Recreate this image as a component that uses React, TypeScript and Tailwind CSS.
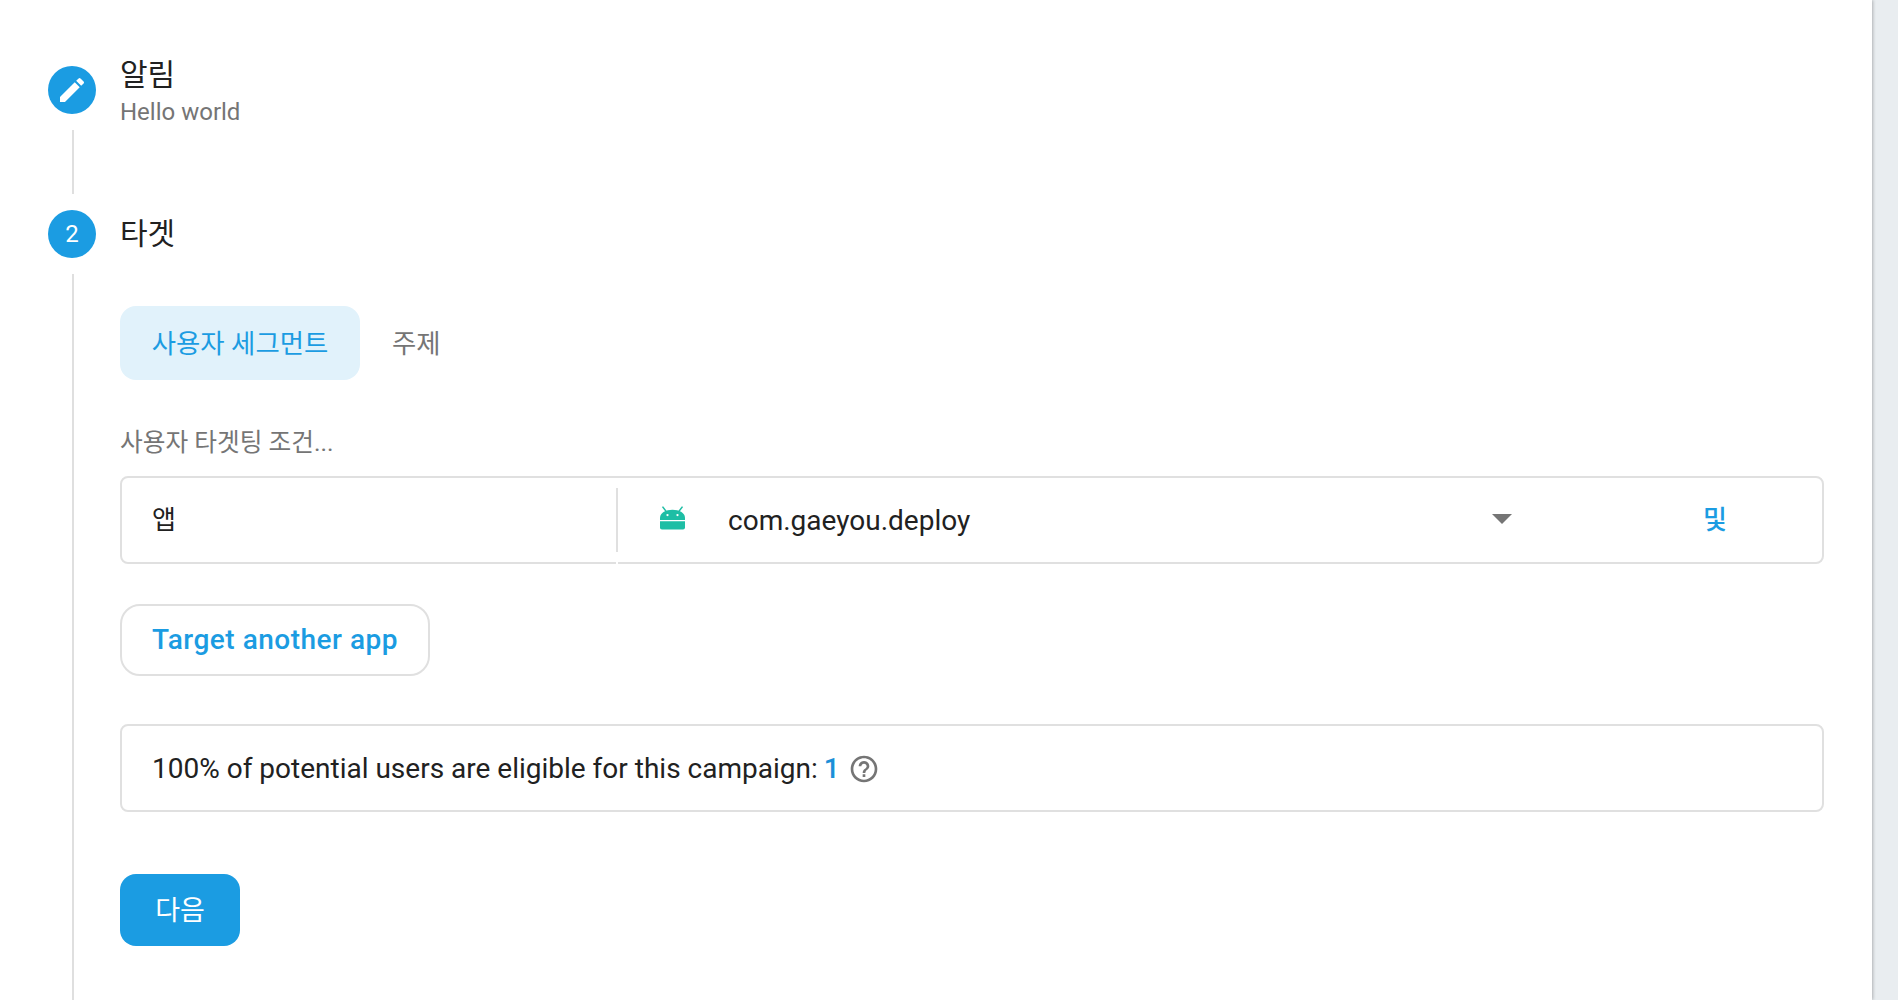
const FONT = "font-['Roboto','Noto_Sans_CJK_KR',sans-serif]"

function AndroidIcon() {
  return (
    <svg className="w-[25px] h-[24px]" viewBox="0 0 26 24" fill="#1ebea5">
      <path d="M0 11.5C0.4 6.5 6 3.5 13 3.5S25.6 6.5 26 11.5V14H0Z" />
      <path d="M0 15.5H26V22A2 2 0 0 1 24 24H2A2 2 0 0 1 0 22Z" />
      <path d="M2.6 0.2L6.6 5.4" stroke="#1ebea5" strokeWidth="1.6" />
      <path d="M23.4 0.2L19.4 5.4" stroke="#1ebea5" strokeWidth="1.6" />
      <circle cx="7.8" cy="9" r="1.2" fill="#fff" />
      <circle cx="18.2" cy="9" r="1.2" fill="#fff" />
    </svg>
  )
}

export default function App() {
  return (
    <div className={`h-screen overflow-hidden flex bg-[#e9edf0] ${FONT}`}>
      <div className="w-[1872px] h-full bg-white shadow-[1px_0_3px_rgba(0,0,0,0.25)] pl-12 pt-[58px] flex flex-col">
        {/* Step 1 */}
        <div className="flex items-center gap-6 h-16">
          <div className="w-12 h-12 rounded-full bg-[#1b9ce2] flex items-center justify-center">
            <svg className="w-8 h-8" viewBox="0 0 24 24" fill="#fff">
              <path d="M3 17.25V21h3.75L17.81 9.94l-3.75-3.75L3 17.25zM20.71 7.04a1 1 0 0 0 0-1.41l-2.34-2.34a1 1 0 0 0-1.41 0l-1.83 1.83 3.75 3.75 1.83-1.83z" />
            </svg>
          </div>
          <div className="mt-[7px]">
            <div className="text-[30px] leading-8 text-[#212121]">알림</div>
            <div className="mt-[5px] text-2xl leading-8 text-[#757575]">Hello world</div>
          </div>
        </div>
        <div className="ml-6 mt-2 h-16 w-0.5 bg-[#dfdfdf]" />

        {/* Step 2 */}
        <div className="flex items-center gap-6 h-12 mt-4">
          <div className="w-12 h-12 rounded-full bg-[#1b9ce2] flex items-center justify-center text-white text-2xl">2</div>
          <div className="text-[30px] leading-8 text-[#212121]">타겟</div>
        </div>
        <div className="ml-6 mt-4 flex-1 border-l-2 border-[#dfdfdf] pl-[46px] pt-8 pr-12">
          <div className="flex items-center gap-8">
            <div className="w-[240px] h-[74px] rounded-2xl bg-[#e1f2fb] text-[#1b9ce2] text-[26.4px] pt-1 flex items-center justify-center">사용자 세그먼트</div>
            <div className="text-[26.4px] text-[#757575] pt-1">주제</div>
          </div>

          <div className="mt-[47px] text-[24.7px] leading-8 text-[#757575]">사용자 타겟팅 조건...</div>

          <div className="mt-[17px] h-[88px] border-2 border-[#e0e0e0] rounded-lg flex items-center relative">
            <div className="w-[494px] pl-[30px] text-[26px] text-[#212121] shrink-0">앱</div>
            <div className="h-16 w-0.5 bg-[#e0e0e0] shrink-0" />
            {/* notch in the bottom border under the divider */}
            <div className="absolute left-[494px] -bottom-0.5 w-0.5 h-0.5 bg-white" />
            <div className="ml-[42px] shrink-0 -mt-1"><AndroidIcon /></div>
            <div className="ml-[43px] mt-0.5 text-[28px] text-[#212121] flex-1">com.gaeyou.deploy</div>
            <div className="w-0 h-0 border-x-[10px] border-x-transparent border-t-[10px] border-t-[#757575] mr-[191px] -mt-0.5" />
            <div className="text-[#1b9ce2] text-[26px] font-medium mr-[95px]">및</div>
          </div>

          <button className="mt-10 block w-[310px] h-[72px] border-2 border-[#e0e0e0] rounded-[20px] text-[#1b9ce2] text-[28px] font-medium tracking-[0.5px]">Target another app</button>

          <div className="mt-12 h-[88px] border-2 border-[#e0e0e0] rounded-lg flex items-center pl-[30px] pt-0.5 text-[28px] text-[#212121]">
            <span>100% of potential users are eligible for this campaign:</span>
            <span className="ml-1.5 text-[#1b8fd8] font-medium">1</span>
            <svg className="ml-2 w-8 h-8" viewBox="0 0 24 24" fill="#757575">
              <path d="M11 18h2v-2h-2v2zm1-16C6.48 2 2 6.48 2 12s4.48 10 10 10 10-4.48 10-10S17.52 2 12 2zm0 18c-4.41 0-8-3.59-8-8s3.59-8 8-8 8 3.59 8 8-3.59 8-8 8zm0-14c-2.21 0-4 1.79-4 4h2c0-1.1.9-2 2-2s2 .9 2 2c0 2-3 1.75-3 5h2c0-2.25 3-2.5 3-5 0-2.21-1.79-4-4-4z" />
            </svg>
          </div>

          <button className="mt-[62px] block w-[120px] h-[72px] rounded-2xl bg-[#1b9ce2] text-white text-[27px] pt-0.5">다음</button>
        </div>
      </div>
    </div>
  )
}
